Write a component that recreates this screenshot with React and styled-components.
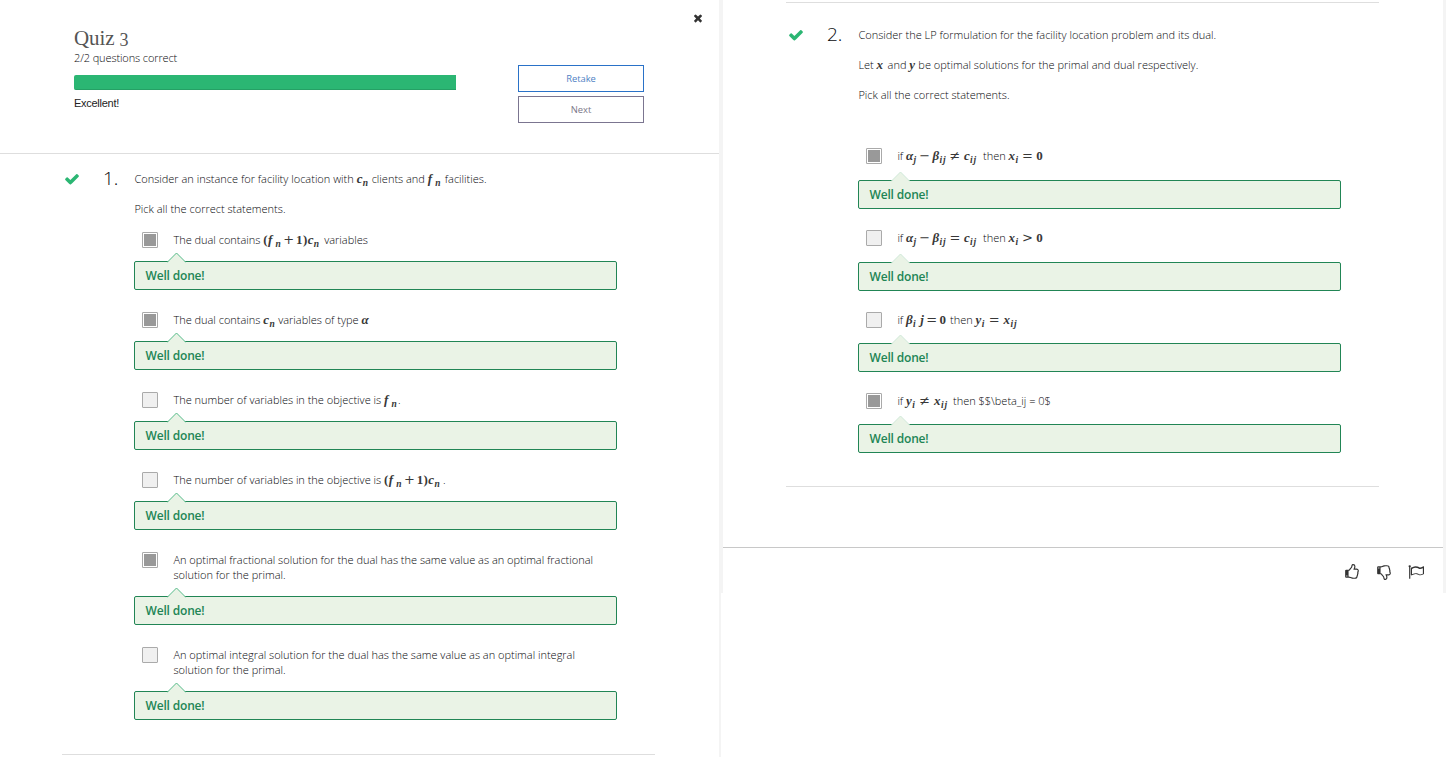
import React from "react";
import styled, { createGlobalStyle } from "styled-components";

const Global = createGlobalStyle`
  * { box-sizing: border-box; }
  body { margin: 0; background: #fff; color: #08080c; font: 300 11px/15px "Open Sans", sans-serif; overflow: hidden; }
  p { margin: 0; }
`;
const Layout = styled.div`display: flex; width: 1446px; height: 757px; align-items: flex-start; overflow: hidden;`;
const LeftPage = styled.main`width: 721px; height: 757px; border-right: 2px solid #f4f4f4;`;
const RightPage = styled.main`width: 725px; height: 593px; border: solid #f4f4f4; border-width: 0 3px 0 2px;`;
const Header = styled.header`height: 154px; display: flex; align-items: flex-start; border-bottom: 1px solid #dedede; padding-left: 74px;`;
const Summary = styled.div`width: 444px; padding-top: 26px;`;
const Title = styled.h1`margin: 0; display: flex; gap: 5px; font: 400 21px/24px "Liberation Serif", serif; letter-spacing: -0.1px; color: #555;`;
const OldStyle = styled.span`font-size: 18px; padding-top: 4px; line-height: 20px;`;
const Score = styled.p`letter-spacing: -0.12px;`;
const Progress = styled.div`width: 382px; height: 15px; margin: 10px 0 6px; background: #2bb673; border-bottom: 1px solid #25a065; border-radius: 2px 0 0 2px;`;
const Verdict = styled.p`font: 11px/15px "Liberation Sans", Arial, sans-serif; color: #222; letter-spacing: -0.27px;`;
const Actions = styled.div`display: flex; flex-direction: column; gap: 4px; padding-top: 65px; width: 126px;`;
const Button = styled.button`
  height: 27px; padding: 0; background: #fff; font: 9.4px/14px "Open Sans", sans-serif; letter-spacing: -0.05px;
  border: 1px solid ${(p) => (p.$primary ? "#2a72c8" : "#7b7590")};
  color: ${(p) => (p.$primary ? "#4f7fc4" : "#7b7788")};
`;
const Close = styled.button`margin: 11px 0 0 48px; border: 0; padding: 0; background: none; width: 14px; height: 14px; color: #333;`;
const Question = styled.section`
  display: grid; grid-template-columns: 41px 31px 483px; margin: ${(p) => (p.$ruled ? "2px 0 0 63px" : "0 0 0 62px")}; width: 593px; align-content: start;
  height: ${(p) => p.$height}px; padding-top: ${(p) => p.$top}px; border: solid #dedede;
  border-width: ${(p) => (p.$ruled ? "1px" : 0)} 0 1px;
`;
const Mark = styled.div`color: #2bb673; padding-left: 2px; height: 16px;`;
const Number = styled.div`font-size: 19px; line-height: 14px; color: #08080c;`;
const Prompt = styled.p`height: 15px; margin-bottom: 15px; padding-left: 0.4px; white-space: nowrap;`;
const Options = styled.div`padding-top: ${(p) => p.$top}px;`;
const Option = styled.div`display: grid; grid-template-columns: 31.4px 1fr; margin-left: 8px; min-height: ${(p) => p.$min}px;`;
const Checkbox = styled.span`
  width: 16px; height: 16px; border: 1px solid #aaa; border-radius: 1px;
  background: ${(p) => (p.$on ? "#999" : "#f0f0f0")}; box-shadow: ${(p) => (p.$on ? "inset 0 0 0 1px #fff" : "none")};
`;
const Label = styled.div`white-space: nowrap; letter-spacing: -0.01px;`;
const Feedback = styled.div`
  position: relative; height: 29px; margin-bottom: ${(p) => p.$gap}px; padding: 6px 10.5px; background: #eaf3e6;
  border: 1px solid #218555; border-radius: 2px; color: #218555; font-weight: 600; font-size: 12px; letter-spacing: -0.17px;
`;
const Tail = styled.svg`position: absolute; left: 32px; top: -10px; display: block;`;
const Math = styled.span`
  display: inline-block; width: ${(p) => p.$w}px; height: 15px; vertical-align: top; white-space: nowrap; letter-spacing: 0.4px;
  font: italic bold 13px/15px "Liberation Serif", serif; color: #383838;
`;
const Sub = styled.sub`font-size: 9.5px; line-height: 0; vertical-align: -3px; letter-spacing: 0.9px;`;
const Up = styled.span`font-style: normal;`;
const Op = styled.span`font: 400 13px/1px "DejaVu Serif", serif; margin: 0 ${(p) => p.$m ?? 1.5}px;`;
const Footer = styled.footer`height: 46px; margin-top: 60px; border-top: 1px solid #c8c8c8; display: flex; justify-content: flex-end; gap: 16px; padding: 15.5px 19.5px 0 0; color: #333;`;
const Glyph = styled.svg`display: block; transform: ${(p) => (p.$flip ? "scaleY(-1)" : "none")};`;

const shapes = {
  check: "M1671 566q0 40-28 68l-724 724-136 136q-28 28-68 28t-68-28l-136-136-362-362q-28-28-28-68t28-68l136-136q28-28 68-28t68 28l294 295 656-657q28-28 68-28t68 28l136 136q28 28 28 68z",
  times: "M1490 1322q0 40-28 68l-136 136q-28 28-68 28t-68-28l-294-294-294 294q-28 28-68 28t-68-28l-136-136q-28-28-28-68t28-68l294-294-294-294q-28-28-28-68t28-68l136-136q28-28 68-28t68 28l294 294 294-294q28-28 68-28t68 28l136 136q28 28 28 68t-28 68l-294 294 294 294q28 28 28 68z",
  thumb: "M384 1344q0-26-19-45t-45-19-45 19-19 45 19 45 45 19 45-19 19-45zm1152-576q0-51-39-89.5t-89-38.5h-352q0-58 48-159.5t48-160.5q0-98-32-145t-128-47q-26 26-38 85t-30.5 125.5-59.5 109.5q-22 23-77 91-4 5-23 30t-31.5 41-34.5 42.5-40 44-38.5 35.5-40 27-35.5 9h-32v640h32q13 0 31.5 3t33 6.5 38 11 35 11.5 35.5 12.5 29 10.5q211 73 342 73h121q192 0 192-167 0-26-5-56 30-16 47.5-52.5t17.5-73.5-18-69q53-50 53-119 0-25-10-55.5t-25-47.5q32-1 53.5-47t21.5-81zm128-1q0 89-49 163 9 33 9 69 0 77-38 144 3 21 3 43 0 101-60 178 1 139-85 219.5t-227 80.5h-129q-96 0-189.5-22.5t-216.5-65.5q-116-40-138-40h-288q-53 0-90.5-37.5t-37.5-90.5v-640q0-53 37.5-90.5t90.5-37.5h274q36-24 137-155 58-75 107-128 24-25 35.5-85.5t30.5-126.5 62-108q39-37 90-37 84 0 151 32.5t102 101.5 35 186q0 93-48 192h176q104 0 180 76t76 179z",
  flag: "M1664 1087v-616q-169 91-306 91-82 0-145-32-100-49-184-76.5t-178-27.5q-173 0-403 127v599q245-113 433-113 55 0 103.5 7.5t98 26 77 31 82.5 39.5l28 14q44 22 101 22 120 0 293-92zm-1344-831q0 35-17.5 64t-46.5 46v1266q0 14-9 23t-23 9h-64q-14 0-23-9t-9-23v-1266q-29-17-46.5-46t-17.5-64q0-53 37.5-90.5t90.5-37.5 90.5 37.5 37.5 90.5zm1472 64v763q0 39-35 57-10 5-17 9-218 116-369 116-88 0-158-35l-28-14q-64-33-99-48t-91-29-114-14q-102 0-235.5 44t-228.5 102q-15 9-33 9-16 0-32-8-32-19-32-56v-742q0-35 31-55 35-21 78.5-42.5t114-52 152.5-49.5 155-19q112 0 209 31t209 86q38 19 89 19 122 0 310-112 22-12 31-17 31-16 62 2 31 20 31 55z",
};
const Icon = ({ name, size, flip }) => (
  <Glyph width={size} height={size} viewBox="0 0 1792 1792" fill="currentColor" $flip={flip}><path d={shapes[name]} /></Glyph>
);

const Fn = () => <>f<Sub>&thinsp;n</Sub></>;
const Cn = () => <>c<Sub>n</Sub></>;
const V = ({ v, s }) => <>{v}<Sub>{s}</Sub></>;

const Answer = ({ on, children, min = 29, gap = 22, light }) => (
  <>
    <Option $min={min}><Checkbox $on={on} /><Label>{children}</Label></Option>
    <Feedback $gap={gap}>
      <Tail width="19" height="11" viewBox="0 0 19 11">
        <path d="M0 10.5 9.5 1 19 10.5" fill="#eaf3e6" stroke={light ? "#cfe8d8" : "#55ba88"} />
      </Tail>
      Well done!
    </Feedback>
  </>
);

export default function App() {
  return (
    <Layout>
      <Global />
      <LeftPage>
        <Header>
          <Summary>
            <Title><span>Quiz</span><OldStyle>3</OldStyle></Title>
            <Score>2/2 questions correct</Score>
            <Progress />
            <Verdict>Excellent!</Verdict>
          </Summary>
          <Actions><Button $primary>Retake</Button><Button>Next</Button></Actions>
          <Close aria-label="Close"><Icon name="times" size={12} /></Close>
        </Header>
        <Question $height={601} $top={17}>
          <Mark><Icon name="check" size={16} /></Mark>
          <Number>1.</Number>
          <div>
            <Prompt>Consider an instance for facility location with <Math $w={15}><Cn /></Math>clients and <Math $w={17}><Fn /></Math>facilities.</Prompt>
            <Prompt>Pick all the correct statements.</Prompt>
            <Options $top={1}>
              <Answer on>The dual contains <Math $w={61}><Up>(</Up><Fn /><Op>+</Op><Up>1)</Up><Cn /></Math>variables</Answer>
              <Answer on>The dual contains <Math $w={15}><Cn /></Math>variables of type <Math $w={10}>α</Math></Answer>
              <Answer>The number of variables in the objective is <Math $w={14}><Fn /></Math>.</Answer>
              <Answer>The number of variables in the objective is <Math $w={59}><Up>(</Up><Fn /><Op>+</Op><Up>1)</Up><Cn /></Math>.</Answer>
              <Answer on min={44}>An optimal fractional solution for the dual has the same value as an optimal fractional<br />solution for the primal.</Answer>
              <Answer min={44}>An optimal integral solution for the dual has the same value as an optimal integral<br />solution for the primal.</Answer>
            </Options>
          </div>
        </Question>
      </LeftPage>
      <RightPage>
        <Question $height={485} $top={24} $ruled>
          <Mark><Icon name="check" size={16} /></Mark>
          <Number>2.</Number>
          <div>
            <Prompt>Consider the LP formulation for the facility location problem and its dual.</Prompt>
            <Prompt>Let <Math $w={11}>x</Math>and <Math $w={9}>y</Math>be optimal solutions for the primal and dual respectively.</Prompt>
            <Prompt>Pick all the correct statements.</Prompt>
            <Options $top={31}>
              <Answer on light min={32} gap={21}>if <Math $w={77}><V v="α" s="j" /><Op $m={2}>−</Op><V v="β" s="ij" /><Op $m={3}>≠</Op><V v="c" s="ij" /></Math>then <Math $w={37}><V v="x" s="i" /><Op $m={3}>=</Op><Up>0</Up></Math></Answer>
              <Answer light min={32} gap={21}>if <Math $w={77}><V v="α" s="j" /><Op $m={2}>−</Op><V v="β" s="ij" /><Op $m={3}>=</Op><V v="c" s="ij" /></Math>then <Math $w={37}><V v="x" s="i" /><Op $m={3}>&gt;</Op><Up>0</Up></Math></Answer>
              <Answer light min={31} gap={21}>if <Math $w={44}><V v="β" s="i" /> j<Op $m={2}>=</Op><Up>0</Up></Math>then <Math $w={45}><V v="y" s="i" /><Op $m={3.5}>=</Op><V v="x" s="ij" /></Math></Answer>
              <Answer on light min={31} gap={21}>if <Math $w={47}><V v="y" s="i" /><Op $m={3.5}>≠</Op><V v="x" s="ij" /></Math>then $$\beta_ij = 0$</Answer>
            </Options>
          </div>
        </Question>
        <Footer><Icon name="thumb" size={16} /><Icon name="thumb" size={16} flip /><Icon name="flag" size={16} /></Footer>
      </RightPage>
    </Layout>
  );
}
